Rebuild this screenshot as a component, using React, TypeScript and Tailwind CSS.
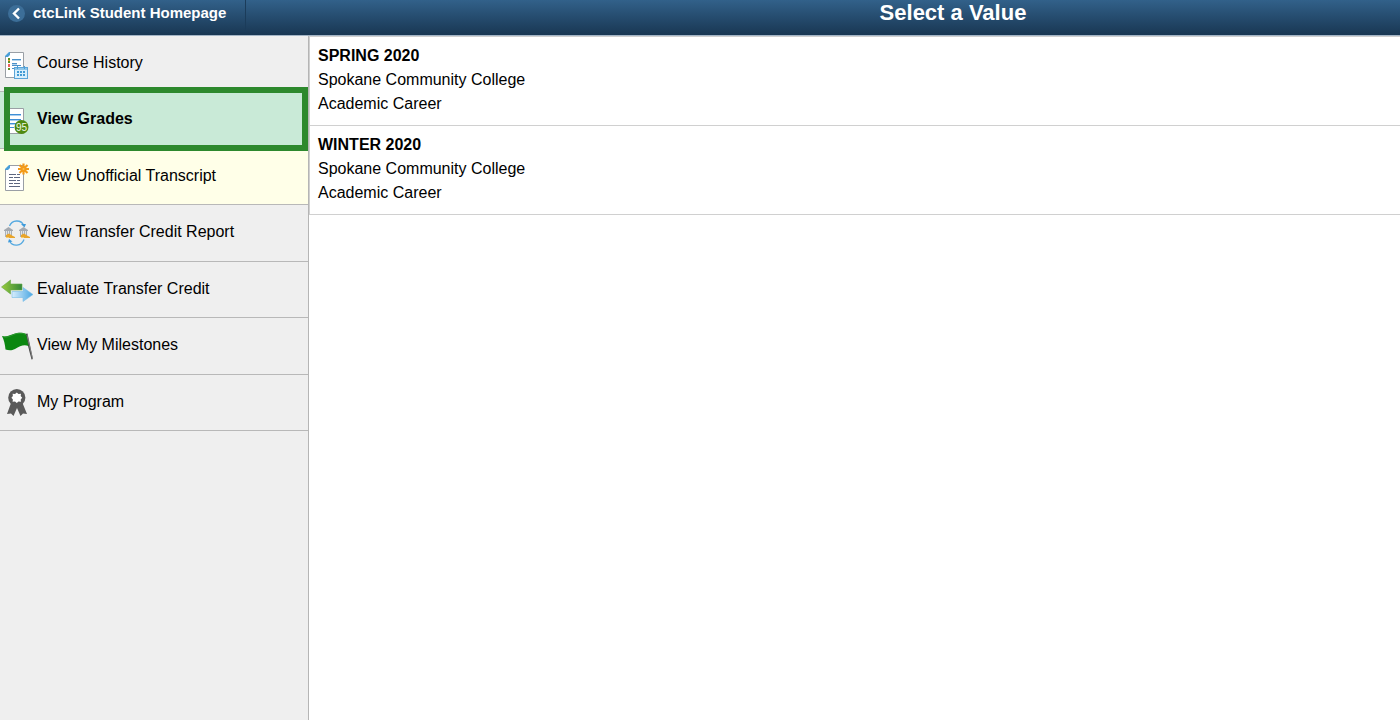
import type { ReactNode } from "react";
import clsx from "clsx";

type NavItem = {
  label: string;
  icon: ReactNode;
  state?: "selected" | "hover";
};

type Term = {
  name: string;
  institution: string;
  career: string;
};

function Page() {
  return (
    <>
      <path d="M9.5 3.5H23.5V28.5H5.5V7.5Z" fill="#fff" stroke="#9a9fa5" />
      <path d="M5 8V7L9 3H10V6L8 8Z" fill="#4a9fd8" />
    </>
  );
}

function CourseHistoryIcon() {
  return (
    <svg viewBox="0 0 34 34" className="size-full" aria-hidden="true">
      <Page />
      <path d="M8 9h2v2H8zM8 12h2v2H8zM8 19h2v2H8z" fill="#5f8f1e" />
      <path d="M8 15h2v3H8z" fill="#f0605c" />
      <path d="M8 11h2v1H8z" fill="#f0a030" />
      <path d="M12 10.5h9M12 14.5h5M12 16.5h9M12 19.5h3" stroke="#4a90c8" />
      <path d="M12 11.5h9M12 15.5h5" stroke="#b5d5ec" />
      <rect x="14.5" y="18.5" width="13" height="11" fill="#d8effc" stroke="#5ba5d8" />
      <path d="M15 19h12v2H15z" fill="#8fc7ea" />
      <path d="M17.5 17v3M24.5 17v3" stroke="#4a9fd8" />
      <path d="M17 22h2v2h-2zM20 22h2v2h-2zM23 22h2v2h-2zM17 25h2v2h-2zM20 25h2v2h-2zM23 25h2v2h-2z" fill="#429bd5" />
    </svg>
  );
}

function GradesIcon() {
  return (
    <svg viewBox="0 0 34 34" className="size-full" aria-hidden="true">
      <Page />
      <path d="M10 9.5h11M10 14.5h11M10 18.5h6M10 22.5h4" stroke="#3f8fd6" />
      <path d="M10 10.5h11M10 15.5h11M10 19.5h6" stroke="#a8cff0" />
      <circle cx="21.5" cy="22" r="7" fill="#4f8a10" />
      <text
        x="21.5"
        y="25.5"
        textAnchor="middle"
        fill="#f0f8e6"
        className="font-['Liberation_Sans'] text-[10px] font-normal"
      >
        95
      </text>
    </svg>
  );
}

function TranscriptIcon() {
  return (
    <svg viewBox="0 0 34 34" className="size-full" aria-hidden="true">
      <Page />
      <path
        d="M9 12.5h7M17 12.5h3M9 15.5h4M14 15.5h6M9 18.5h7M17 18.5h3M9 21.5h4M14 21.5h6M9 24.5h11"
        stroke="#5d6780"
        strokeWidth="1.2"
      />
      <path
        d="M23.5 1.5v11M18 7h11M19.500 3l8 8M27.500 3l-8 8"
        stroke="#f39a18"
        strokeWidth="2.2"
      />
      <circle cx="23.5" cy="7" r="2.8" fill="#f39a18" />
      <circle cx="23.5" cy="7" r="1" fill="#ffc04d" />
    </svg>
  );
}

function Campus({ x }: { x: number }) {
  return (
    <g transform={`translate(${x} 9)`}>
      <path d="M0 4V3L4.5 0L9 3V4Z" fill="#a4a9b0" />
      <path d="M1 4h7v6H1z" fill="#e3e6e8" />
      <path d="M1.5 4v6M3.5 4v5M5.5 4v5M7.5 4v6" stroke="#a9b0b8" />
      <path d="M2 11V8L5 6.5L8 8.5L11 10V11Z" fill="#e9a52b" />
      <path d="M2 10.500h3" stroke="#f4cd72" />
    </g>
  );
}

function TransferReportIcon() {
  return (
    <svg viewBox="0 0 34 34" className="size-full" aria-hidden="true">
      <path d="M9.500 8C12 1.500 21 1.500 23.500 7M24 21.500C21.500 28.500 12.500 29 9.500 23" fill="none" stroke="#55a9e0" strokeWidth="1.3" />
      <path d="M21 6h5L24.500 9.500ZM8 24.500L9 21L12.500 23.500Z" fill="#3f9bdb" />
      <Campus x={4} />
      <Campus x={19} />
    </svg>
  );
}

function EvaluateIcon() {
  return (
    <svg viewBox="0 0 34 34" className="size-full" aria-hidden="true">
      <defs>
        <linearGradient id="leftArrow">
          <stop offset="0" stopColor="#9acb3c" />
          <stop offset="1" stopColor="#35883a" />
        </linearGradient>
        <linearGradient id="rightArrow">
          <stop offset="0" stopColor="#d7edfc" />
          <stop offset="1" stopColor="#49a6e2" />
        </linearGradient>
      </defs>
      <path d="M1.500 12L10.500 5V9H22V15H10.500V19Z" fill="url(#leftArrow)" stroke="#66a846" strokeWidth="0.6" />
      <path d="M33 19.500L23 12.500V16.500H12V22.500H23V26.500Z" fill="url(#rightArrow)" stroke="#77bce8" strokeWidth="0.6" />
    </svg>
  );
}

function MilestonesIcon() {
  return (
    <svg viewBox="0 0 34 34" className="size-full" aria-hidden="true">
      <path d="M25 3L27.500 2.500L33 28L31.500 28.500Z" fill="#444" />
      <path d="M27 4L32.500 28" stroke="#999" strokeWidth="0.7" />
      <path d="M2 5C7 7 11 3 17 2C21 1.500 24 2 26 3L28.500 15C24 13 20 15 15 18C11 20 8 19 5.500 18.500C5 13 4 9 2 5Z" fill="#0b8710" />
      <path d="M2.500 5.500C8 7.500 12 3.500 17 2.500C21 2 24 2.500 26 3.500" fill="none" stroke="#2f9b32" />
    </svg>
  );
}

function ProgramIcon() {
  return (
    <svg viewBox="0 0 34 34" className="size-full" aria-hidden="true">
      <path d="M11 15L17 17.500L22.500 15L27 26L23 25.500L20.500 28L17 20L13.500 28L11 25.500L7 26Z" fill="#595959" />
      <circle cx="16.800" cy="9.700" r="8.600" fill="#595959" />
      <path d="M16.800 4.500L18.500 6L21 5.800L20.700 8L22.200 9.700L20.700 11.500L21 13.800L18.500 13.500L16.800 15L15 13.500L12.600 13.800L12.900 11.500L11.400 9.700L12.900 8L12.600 5.800L15 6Z" fill="#fff" />
    </svg>
  );
}

const NAV_ITEMS: NavItem[] = [
  { label: "Course History", icon: <CourseHistoryIcon /> },
  { label: "View Grades", icon: <GradesIcon />, state: "selected" },
  { label: "View Unofficial Transcript", icon: <TranscriptIcon />, state: "hover" },
  { label: "View Transfer Credit Report", icon: <TransferReportIcon /> },
  { label: "Evaluate Transfer Credit", icon: <EvaluateIcon /> },
  { label: "View My Milestones", icon: <MilestonesIcon /> },
  { label: "My Program", icon: <ProgramIcon /> },
];

const TERMS: Term[] = [
  { name: "SPRING 2020", institution: "Spokane Community College", career: "Academic Career" },
  { name: "WINTER 2020", institution: "Spokane Community College", career: "Academic Career" },
];

function Header() {
  return (
    <header className="flex h-9 shrink-0 items-start border-b border-[#a3b5c6] bg-linear-to-b from-[#32618a] to-[#193753] font-bold text-white">
      <button
        type="button"
        className="flex h-8 w-[246px] shrink-0 items-center gap-2 border-r border-b border-[#1b3c5a] pb-1 pl-2 text-[15px] whitespace-nowrap"
      >
        <svg viewBox="0 0 17 17" className="size-[17px]" aria-hidden="true">
          <circle cx="8.500" cy="8.500" r="8.500" fill="#3c6e98" />
          <path d="M11 3.500L6 8.500L11 13.500" fill="none" stroke="#fff" strokeWidth="2.400" />
        </svg>
        ctcLink Student Homepage
      </button>
      <h1 className="flex-1 pl-[260px] text-center text-[22px] leading-[26px]">Select a Value</h1>
    </header>
  );
}

function Sidebar() {
  return (
    <nav className="w-[309px] shrink-0 border-r border-[#b5b5b5] bg-[#efefef]">
      <ul className="grid h-[395px] grid-rows-7">
        {NAV_ITEMS.map(({ label, icon, state }) => (
          <li
            key={label}
            className={clsx(
              "relative border-b border-[#b8b8b8]",
              state === "selected" && "z-10 bg-[#c9ead7] font-bold",
              state === "hover" && "bg-[#ffffe8]",
            )}
          >
            <button type="button" className="flex size-full items-start text-left">
              <span className="mt-[13px] mr-[3px] size-[34px] shrink-0">{icon}</span>
              <span className="pt-[15px] leading-6">{label}</span>
            </button>
            {state === "selected" ? (
              <span className="pointer-events-none absolute -top-[5px] right-0 -bottom-[3px] left-1 border-6 border-[#2d892d]" />
            ) : null}
          </li>
        ))}
      </ul>
    </nav>
  );
}

export default function App() {
  return (
    <div className="flex min-h-screen flex-col bg-white font-['Liberation_Sans',Arial,sans-serif] text-base text-black">
      <Header />
      <div className="flex flex-1">
        <Sidebar />
        <main className="flex-1 border-t border-[#d0d0d0]">
          <ul>
            {TERMS.map((term) => (
              <li key={term.name} className="border-b border-l border-[#d0d0d0]">
                <button type="button" className="block w-full px-2 pt-[7px] pb-[9px] text-left leading-6">
                  <span className="block font-bold">{term.name}</span>
                  <span className="block">{term.institution}</span>
                  <span className="block">{term.career}</span>
                </button>
              </li>
            ))}
          </ul>
        </main>
      </div>
    </div>
  );
}
